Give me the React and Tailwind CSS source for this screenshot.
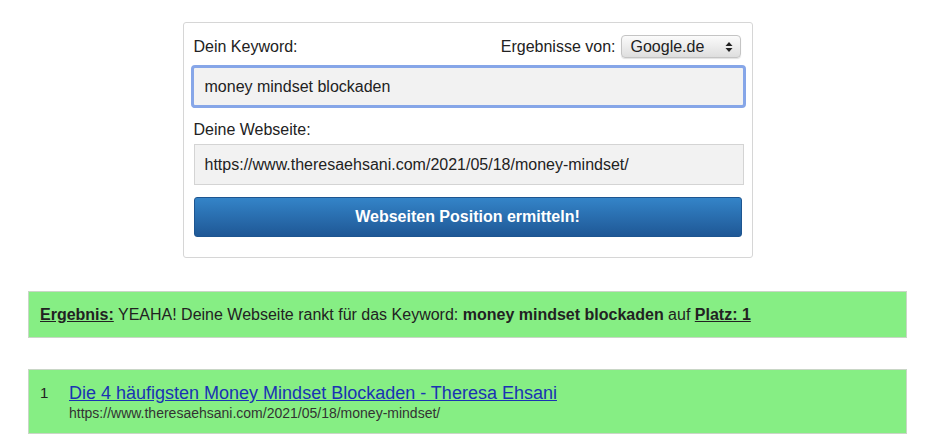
import { useState } from 'react';

const font = { fontFamily: '"Liberation Sans", Arial, sans-serif' };

function SelectArrows() {
  return (
    <svg width="8" height="12" viewBox="0 0 8 12" className="text-[#222]">
      <path d="M4 1 L7.5 5 H0.5 Z" fill="currentColor" />
      <path d="M4 11 L7.5 7 H0.5 Z" fill="currentColor" />
    </svg>
  );
}

export default function App() {
  const [keyword, setKeyword] = useState('money mindset blockaden');
  const [site, setSite] = useState('https://www.theresaehsani.com/2021/05/18/money-mindset/');

  return (
    <div className="w-[935px] h-[442px] bg-white text-[#222] overflow-hidden" style={font}>
      <div className="pt-[22px]">
        {/* Search form */}
        <div className="mx-auto w-[570px] h-[236px] border border-[#d6d6d6] rounded-[3px] px-[10px] pt-[12px]">
          <div className="flex items-center justify-between h-[23px]">
            <span className="text-[16px]">Dein Keyword:</span>
            <div className="flex items-center gap-[5px] mr-[1px]">
              <span className="text-[16px]">Ergebnisse von:</span>
              <div className="flex items-center justify-between w-[120px] h-[23px] pl-[9px] pr-[7px] rounded-[4px] border border-[#c4c4c4] bg-gradient-to-b from-[#fbfbfb] to-[#dedede] shadow-[0_1px_1px_rgba(0,0,0,0.12)]">
                <span className="text-[16px]">Google.de</span>
                <SelectArrows />
              </div>
            </div>
          </div>

          <div className="mt-[7px] -mx-[3px]">
            <input
              value={keyword}
              onChange={(e) => setKeyword(e.target.value)}
              className="w-[555px] h-[43px] border-[3px] border-[#86a6e8] rounded-[4px] bg-[#f2f2f2] pl-[11px] text-[16px] text-[#222] outline-none"
              style={font}
            />
          </div>

          <div className="mt-[11px] text-[16px] leading-[22px]">Deine Webseite:</div>

          <input
            value={site}
            onChange={(e) => setSite(e.target.value)}
            className="mt-[3px] w-[550px] h-[41px] border border-[#d4d4d4] bg-[#f2f2f2] pl-[10px] text-[16px] text-[#222] outline-none"
            style={font}
          />

          <button
            className="mt-[12px] w-[548px] h-[40px] rounded-[3px] border border-[#1d5590] bg-gradient-to-b from-[#3484c8] to-[#1f5896] text-white text-[16px] font-bold"
            style={font}
          >
            Webseiten Position ermitteln!
          </button>
        </div>

        {/* Result summary */}
        <div className="mx-[28px] mt-[33px] h-[47px] border border-[#c9d6c6] bg-[#86ee84] pl-[11px] flex items-center text-[16px]">
          <span>
            <span className="font-bold underline">Ergebnis:</span> YEAHA! Deine Webseite rankt für das Keyword:{' '}
            <span className="font-bold">money mindset blockaden</span> auf{' '}
            <span className="font-bold underline">Platz: 1</span>
          </span>
        </div>

        {/* Result list */}
        <div className="mx-[28px] mt-[31px] h-[65px] border border-[#c9d6c6] bg-[#86ee84] pl-[11px] pt-[12px] flex">
          <span className="w-[29px] text-[15px] leading-[22px]">1</span>
          <div>
            <a href="#" className="block text-[18px] leading-[22px] text-[#1a33b3] underline">
              Die 4 häufigsten Money Mindset Blockaden - Theresa Ehsani
            </a>
            <div className="text-[14px] leading-[18px] text-[#333]">
              https://www.theresaehsani.com/2021/05/18/money-mindset/
            </div>
          </div>
        </div>
      </div>
    </div>
  );
}
